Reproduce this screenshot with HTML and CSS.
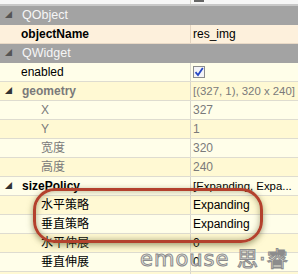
FILE: index.html
```html
<!doctype html>
<html lang="zh">
<head>
    <meta charset="utf-8">
    <title>Property Editor</title>
    <link rel="stylesheet" href="styles.css">
</head>
<body>
    <div class="editor">
        <div class="row top-strip">
            <div class="name"></div>
            <div class="value"><span class="cut-mark"></span></div>
        </div>

        <div class="row group">
            <div class="name"><span class="arrow">&#9698;</span>QObject</div>
            <div class="value"></div>
        </div>
        <div class="row peach">
            <div class="name lvl1 bold">objectName</div>
            <div class="value">res_img</div>
        </div>

        <div class="row group">
            <div class="name"><span class="arrow">&#9698;</span>QWidget</div>
            <div class="value"></div>
        </div>
        <div class="row alt-a">
            <div class="name lvl1">enabled</div>
            <div class="value"><span class="check"><svg width="10" height="10" viewBox="0 0 10 10"><path d="M1.5 5.2 L4 8 L8.8 1" fill="none" stroke="#2748c4" stroke-width="1.8"/></svg></span></div>
        </div>
        <div class="row alt-b">
            <div class="name lvl0 bold gray"><span class="arrow dark">&#9698;</span>geometry</div>
            <div class="value gray narrow">[(327, 1), 320 x 240]</div>
        </div>
        <div class="row alt-a">
            <div class="name lvl2 gray">X</div>
            <div class="value gray">327</div>
        </div>
        <div class="row alt-b">
            <div class="name lvl2 gray">Y</div>
            <div class="value gray">1</div>
        </div>
        <div class="row alt-a">
            <div class="name lvl2 gray">宽度</div>
            <div class="value gray">320</div>
        </div>
        <div class="row alt-b">
            <div class="name lvl2 gray">高度</div>
            <div class="value gray">240</div>
        </div>
        <div class="row alt-a">
            <div class="name lvl0 bold"><span class="arrow dark">&#9698;</span>sizePolicy</div>
            <div class="value narrow">[Expanding, Expa...</div>
        </div>
        <div class="row alt-b">
            <div class="name lvl2">水平策略</div>
            <div class="value">Expanding</div>
        </div>
        <div class="row alt-a">
            <div class="name lvl2">垂直策略</div>
            <div class="value">Expanding</div>
        </div>
        <div class="row alt-b">
            <div class="name lvl2">水平伸展</div>
            <div class="value">0</div>
        </div>
        <div class="row alt-a">
            <div class="name lvl2">垂直伸展</div>
            <div class="value">0</div>
        </div>
        <div class="row alt-b">
            <div class="name"></div>
            <div class="value"></div>
        </div>

        <!-- hand drawn highlight over the two policy rows -->
        <div class="highlight"></div>
        <div class="watermark">emouse 思·睿</div>
    </div>
</body>
</html>
```

FILE: styles.css
```css
body {
    margin: 0;
    background: #ffffff;
    font-family: "Liberation Sans", "Noto Sans CJK SC", sans-serif;
    font-size: 12px;
    color: #000000;
}
.editor {
    position: relative;
    width: 298px;
    height: 274px;
    overflow: hidden;
}
.row {
    display: flex;
    height: 18px;
    line-height: 18px;
    border-bottom: 1px solid #dedcd0;
    white-space: nowrap;
}
.name {
    width: 190px;
    flex: none;
    border-right: 1px solid #d8d6cc;
    overflow: hidden;
}
.value {
    flex: 1;
    padding-left: 2px;
    overflow: hidden;
}
.value.narrow {
    font-size: 11.4px;
}
.top-strip {
    height: 4px;
    line-height: 4px;
    background: #f6f6f6;
    border-bottom: 2px solid #c8c8c8;
}
.cut-mark {
    display: inline-block;
    width: 10px;
    height: 2px;
    margin-left: 1px;
    background: #666666;
    vertical-align: top;
}
.group {
    background: #a3a3a3;
    color: #f6f6f6;
    font-size: 12.5px;
    border-bottom: 1px solid #a3a3a3;
}
.group .name,
.group .value {
    border-right: none;
}
.group .name {
    padding-left: 5px;
    width: 185px;
}
.arrow {
    display: inline-block;
    width: 17px;
    font-size: 7px;
    color: #555555;
    vertical-align: top;
}
.arrow.dark {
    color: #333333;
}
.peach {
    background: #fdf0dc;
    border-bottom-color: #e9d9c6;
}
.peach .name {
    border-right-color: #e4d4c0;
}
.alt-a {
    background: #fffee9;
}
.alt-b {
    background: #fff9d3;
}
.lvl0 {
    padding-left: 5px;
    width: 185px;
}
.lvl1 {
    padding-left: 21px;
    width: 169px;
}
.lvl2 {
    padding-left: 41px;
    width: 149px;
}
.bold {
    font-weight: bold;
}
.gray {
    color: #7a7a7a;
}
.check {
    display: inline-block;
    width: 10px;
    height: 10px;
    margin-top: 3px;
    border: 1px solid #8c8c8c;
    background: #f4f4f8;
    vertical-align: top;
}
.check svg {
    display: block;
}
.highlight {
    position: absolute;
    left: 33px;
    top: 188px;
    width: 224px;
    height: 49px;
    border: 3px solid #b3412d;
    border-radius: 22px;
    box-shadow: 0 2px 6px rgba(90, 90, 40, 0.6), inset 0 0 6px rgba(90, 90, 40, 0.5);
}
.watermark {
    position: absolute;
    left: 140px;
    top: 242px;
    font-family: "DejaVu Sans", "Noto Sans CJK SC", sans-serif;
    font-size: 21px;
    letter-spacing: 1px;
    color: rgba(232, 232, 232, 0.85);
    -webkit-text-stroke: 1px #8c8c8c;
}
```
